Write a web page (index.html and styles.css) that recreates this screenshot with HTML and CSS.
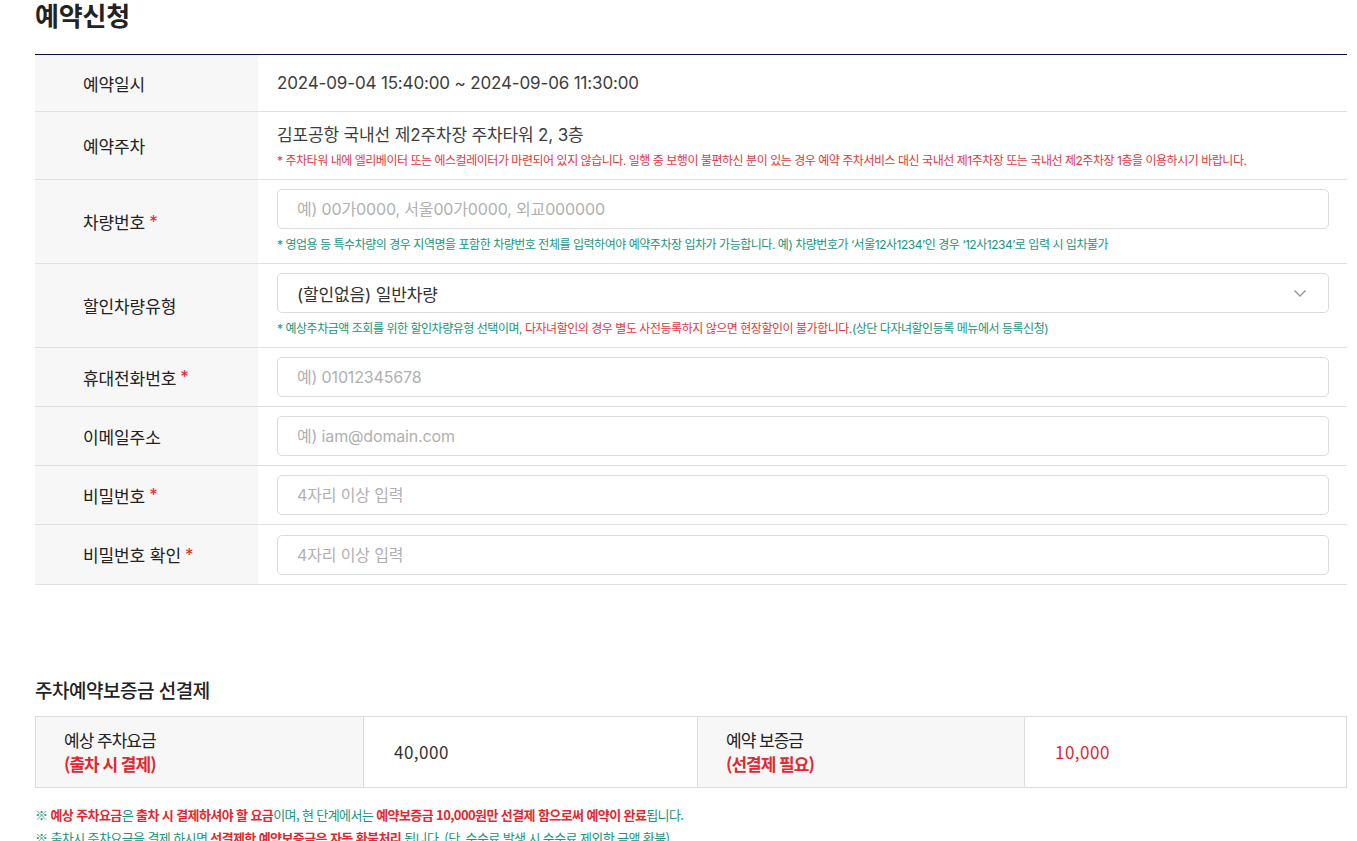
FILE: index.html
```html
<!DOCTYPE html>
<html lang="ko">
<head>
<meta charset="utf-8">
<title>예약신청</title>
<link rel="stylesheet" href="styles.css">
</head>
<body>
<div class="page">
  <h1 class="page-title">예약신청</h1>

  <div class="form-table">
    <div class="row r-date">
      <div class="th">예약일시</div>
      <div class="td"><div class="value">2024-09-04 15:40:00 ~ 2024-09-06 11:30:00</div></div>
    </div>
    <div class="row r-park">
      <div class="th">예약주차</div>
      <div class="td">
        <div class="value">김포공항 국내선 제2주차장 주차타워 2, 3층</div>
        <p class="note red">* 주차타워 내에 엘리베이터 또는 에스컬레이터가 마련되어 있지 않습니다. 일행 중 보행이 불편하신 분이 있는 경우 예약 주차서비스 대신 국내선 제1주차장 또는 국내선 제2주차장 1층을 이용하시기 바랍니다.</p>
      </div>
    </div>
    <div class="row r-note">
      <div class="th">차량번호<span class="req">*</span></div>
      <div class="td">
        <input class="field" type="text" placeholder="예) 00가0000, 서울00가0000, 외교000000">
        <p class="note teal">* 영업용 등 특수차량의 경우 지역명을 포함한 차량번호 전체를 입력하여야 예약주차장 입차가 가능합니다. 예) 차량번호가 ‘서울12사1234’인 경우 ‘12사1234’로 입력 시 입차불가</p>
      </div>
    </div>
    <div class="row r-note">
      <div class="th">할인차량유형</div>
      <div class="td">
        <div class="field select">
          <span>(할인없음) 일반차량</span>
          <svg class="chev" width="14" height="9" viewBox="0 0 14 9"><path d="M1.5 1.5 L7 7 L12.5 1.5" fill="none" stroke="#8e97a8" stroke-width="1.4"/></svg>
        </div>
        <p class="note teal">* 예상주차금액 조회를 위한 할인차량유형 선택이며, <span class="red">다자녀할인의 경우 별도 사전등록하지 않으면 현장할인이 불가합니다.</span>(상단 다자녀할인등록 메뉴에서 등록신청)</p>
      </div>
    </div>
    <div class="row r-input">
      <div class="th">휴대전화번호<span class="req">*</span></div>
      <div class="td"><input class="field" type="text" placeholder="예) 01012345678"></div>
    </div>
    <div class="row r-input">
      <div class="th">이메일주소</div>
      <div class="td"><input class="field" type="text" placeholder="예) iam@domain.com"></div>
    </div>
    <div class="row r-input">
      <div class="th">비밀번호<span class="req">*</span></div>
      <div class="td"><input class="field" type="password" placeholder="4자리 이상 입력"></div>
    </div>
    <div class="row r-input r-last">
      <div class="th">비밀번호 확인<span class="req">*</span></div>
      <div class="td"><input class="field" type="password" placeholder="4자리 이상 입력"></div>
    </div>
  </div>

  <h2 class="sub-title">주차예약보증금 선결제</h2>
  <div class="pay-table">
    <div class="pth">예상 주차요금<br><strong>(출차 시 결제)</strong></div>
    <div class="ptd">40,000</div>
    <div class="pth">예약 보증금<br><strong>(선결제 필요)</strong></div>
    <div class="ptd red">10,000</div>
  </div>

  <ul class="pay-notes">
    <li>※ <b>예상 주차요금</b>은 <b>출차 시 결제하셔야 할 요금</b>이며, 현 단계에서는 <b>예약보증금 10,000원만 선결제 함으로써 예약이 완료</b>됩니다.</li>
    <li>※ 출차시 주차요금을 결제 하시면 <b>선결제한 예약보증금은 자동 환불처리</b> 됩니다. (단, 수수료 발생 시 수수료 제외한 금액 환불)</li>
  </ul>
</div>
</body>
</html>
```
FILE: styles.css
```css
* { box-sizing: border-box; }
html, body { margin: 0; padding: 0; background: #fff; }
body {
  font-family: Inter, "Noto Sans CJK KR", sans-serif;
  color: #222;
  overflow: hidden;
}
.page {
  width: 1347px;
  padding-left: 35px;
}
.page-title {
  margin: 0;
  font-size: 26px;
  line-height: 34px;
  font-weight: 600;
  letter-spacing: -0.2px;
  color: #222;
  padding-bottom: 20px;
}
.form-table {
  border-top: 1px solid #0d0d4a;
}
.row {
  display: grid;
  grid-template-columns: 223px 1fr;
  border-bottom: 1px solid #e0e0e0;
}
.th {
  background: #f7f7f7;
  display: flex;
  align-items: center;
  padding-left: 48px;
  font-size: 17px;
  letter-spacing: -0.1px;
  color: #222;
}
.req { color: #e5262f; margin-left: 4px; }
.td {
  padding: 0 18px 0 19px;
  display: flex;
  flex-direction: column;
  justify-content: center;
}
.r-date { height: 57px; }
.r-park { height: 68px; }
.r-park .td { padding-top: 1px; }
.r-note { height: 84px; }
.r-note .td { justify-content: flex-start; padding-top: 9px; }
.r-input { height: 59px; }
.r-input.r-last { height: 60px; }
.value {
  font-size: 17px;
  line-height: 24px;
  letter-spacing: -0.15px;
  color: #3d3d3d;
}
.note {
  margin: 6px 0 0;
  font-size: 12px;
  line-height: 16px;
  letter-spacing: -0.47px;
}
.r-note .note { margin-top: 8px; }
.red { color: #e8353b; }
.teal { color: #16967c; }
.field {
  width: 100%;
  height: 40px;
  border: 1px solid #dcdcdc;
  border-radius: 5px;
  padding: 0 19px;
  font-family: Inter, "Noto Sans CJK KR", sans-serif;
  font-size: 16px;
  letter-spacing: -0.15px;
  color: #333;
  background: #fff;
  outline: none;
}
.field::placeholder { color: #b0b0b0; }
.select {
  display: flex;
  align-items: center;
  justify-content: space-between;
  padding-right: 21px;
  font-size: 17px;
}
.sub-title {
  margin: 91px 0 12px;
  font-family: "Noto Sans CJK KR", sans-serif;
  font-size: 19px;
  line-height: 28px;
  font-weight: 500;
  letter-spacing: -0.5px;
  color: #222;
}
.pay-table {
  display: grid;
  grid-template-columns: 328px 334px 327px 1fr;
  border: 1px solid #dcdcdc;
  font-family: "Noto Sans CJK KR", sans-serif;
}
.pth, .ptd {
  height: 70px;
  display: flex;
  flex-direction: column;
  justify-content: center;
  font-size: 17px;
  line-height: 24px;
  letter-spacing: -1px;
}
.pth {
  background: #f7f7f7;
  padding-left: 28px;
  border-right: 1px solid #dcdcdc;
  color: #222;
}
.pth strong { color: #e5262f; font-weight: 700; }
.ptd {
  padding-left: 30px;
  border-right: 1px solid #dcdcdc;
  color: #333;
  letter-spacing: 0.5px;
}
.ptd:last-child { border-right: 0; }
.ptd.red { color: #e5262f; }
.pay-notes {
  list-style: none;
  margin: 15px 0 0;
  padding: 0;
  font-family: "Noto Sans CJK KR", sans-serif;
  font-size: 13px;
  line-height: 23px;
  letter-spacing: -0.6px;
  color: #16967c;
}
.pay-notes b { color: #e5262f; font-weight: 700; }
```
